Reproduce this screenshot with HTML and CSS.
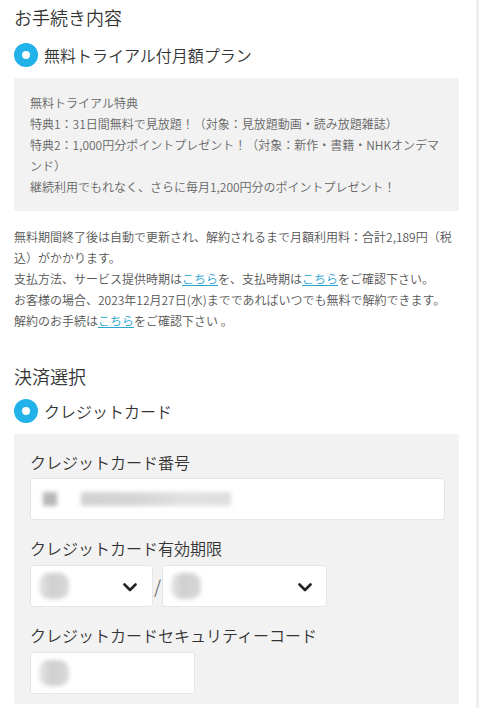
FILE: index.html
```html
<!DOCTYPE html>
<html lang="ja">
<head>
  <meta charset="UTF-8" />
  <meta name="viewport" content="width=device-width, initial-scale=1.0"/>
  <title>お手続き内容</title>
  <link rel="stylesheet" href="styles.css">
</head>
<body>

  <div class="page">
    <h2 class="section-title">お手続き内容</h2>

    <div class="choice">
      <span class="radio"></span>
      <span>無料トライアル付月額プラン</span>
    </div>

    <div class="panel perks">
      <p>無料トライアル特典</p>
      <p>特典1：31日間無料で見放題！（対象：見放題動画・読み放題雑誌）</p>
      <p>特典2：1,000円分ポイントプレゼント！（対象：新作・書籍・NHKオンデマンド）</p>
      <p>継続利用でもれなく、さらに毎月1,200円分のポイントプレゼント！</p>
    </div>

    <div class="terms">
      <p>無料期間終了後は自動で更新され、解約されるまで月額利用料：合計2,189円（税込）がかかります。</p>
      <p>支払方法、サービス提供時期は<a href="#">こちら</a>を、支払時期は<a href="#">こちら</a>をご確認下さい。</p>
      <p>お客様の場合、2023年12月27日(水)までであればいつでも無料で解約できます。</p>
      <p>解約のお手続は<a href="#">こちら</a>をご確認下さい 。</p>
    </div>

    <h2 class="section-title pay-title">決済選択</h2>

    <div class="choice">
      <span class="radio"></span>
      <span>クレジットカード</span>
    </div>

    <div class="panel card-form">
      <label class="field-label">クレジットカード番号</label>
      <div class="field card-number">
        <span class="blur blur-dark"></span>
        <span class="blur blur-long"></span>
      </div>

      <label class="field-label">クレジットカード有効期限</label>
      <div class="expiry">
        <div class="field select month">
          <span class="blur blur-small"></span>
          <svg class="chevron" viewBox="0 0 14 9"><polyline points="1.5,1.5 7,7 12.5,1.5" /></svg>
        </div>
        <span class="slash">/</span>
        <div class="field select year">
          <span class="blur blur-small"></span>
          <svg class="chevron" viewBox="0 0 14 9"><polyline points="1.5,1.5 7,7 12.5,1.5" /></svg>
        </div>
      </div>

      <label class="field-label">クレジットカードセキュリティーコード</label>
      <div class="field cvc">
        <span class="blur blur-small"></span>
      </div>
    </div>
  </div>

</body>
</html>
```

FILE: styles.css
```css
body {
  margin: 0;
  padding: 0;
  background-color: #fff;
  color: #333;
  font-family: "Noto Sans CJK JP", "Noto Sans", sans-serif;
  font-weight: 350;
}

.page {
  width: 479px;
  min-height: 708px;
  box-sizing: border-box;
  padding: 0 17px 0 14px;
  border-right: 3px solid #efefef;
  display: flex;
  flex-direction: column;
}

.section-title {
  margin: 4px 0 0;
  font-size: 18px;
  font-weight: 350;
  line-height: 26px;
  color: #333;
}

.pay-title {
  margin-top: 32px;
}

.choice {
  display: flex;
  align-items: center;
  gap: 6px;
  height: 24px;
  margin-top: 13px;
  font-size: 16px;
  color: #333;
}

.pay-title + .choice {
  margin-top: 10px;
}

.radio {
  width: 24px;
  height: 24px;
  box-sizing: border-box;
  border-radius: 50%;
  border: 8px solid #20b2e8;
  background-color: #fff;
  flex-shrink: 0;
}

.panel {
  background-color: #f2f2f2;
  margin-top: 11px;
  border-radius: 2px;
}

.perks {
  padding: 14px 16px;
  font-size: 12px;
  line-height: 21px;
  color: #666;
}

.perks p,
.terms p {
  margin: 0;
}

.terms {
  margin-top: 15px;
  font-size: 12px;
  line-height: 21px;
  color: #555;
}

.terms a {
  color: #2aa6cf;
  text-decoration: underline;
}

.card-form {
  padding: 16px 16px 10px;
  display: flex;
  flex-direction: column;
}

.field-label {
  font-size: 16px;
  line-height: 24px;
  color: #333;
  margin-top: 16px;
}

.field-label:first-child {
  margin-top: 0;
}

.field {
  height: 42px;
  box-sizing: border-box;
  background-color: #fff;
  border: 1px solid #e6e6e6;
  border-radius: 3px;
  margin-top: 4px;
  display: flex;
  align-items: center;
  padding-left: 8px;
  position: relative;
  overflow: hidden;
}

.card-number {
  width: 415px;
}

.expiry {
  display: flex;
  align-items: center;
  margin-top: 5px;
}

.expiry .field {
  margin-top: 0;
}

.month {
  width: 123px;
}

.year {
  width: 165px;
}

.slash {
  width: 9px;
  text-align: center;
  font-size: 18px;
  color: #666;
}

.chevron {
  position: absolute;
  right: 15px;
  top: 17px;
  width: 14px;
  height: 9px;
  fill: none;
  stroke: #222;
  stroke-width: 2.6;
  stroke-linecap: round;
  stroke-linejoin: round;
}

.year .chevron {
  right: 14px;
}

.cvc {
  width: 165px;
  margin-top: 5px;
}

.blur {
  display: block;
  height: 14px;
  filter: blur(2px);
}

.blur-dark {
  width: 14px;
  background-color: #b8b8b8;
  margin-left: 4px;
}

.blur-long {
  width: 150px;
  margin-left: 24px;
  background: linear-gradient(90deg, #d2d2d2 0%, #d6d6d6 40%, #e2e2e2 70%, #dedede 100%);
}

.blur-small {
  width: 30px;
  height: 26px;
  border-radius: 10px;
  background: linear-gradient(90deg, #e6e6e6 0%, #cfcfcf 40%, #d8d8d8 100%);
}
```
